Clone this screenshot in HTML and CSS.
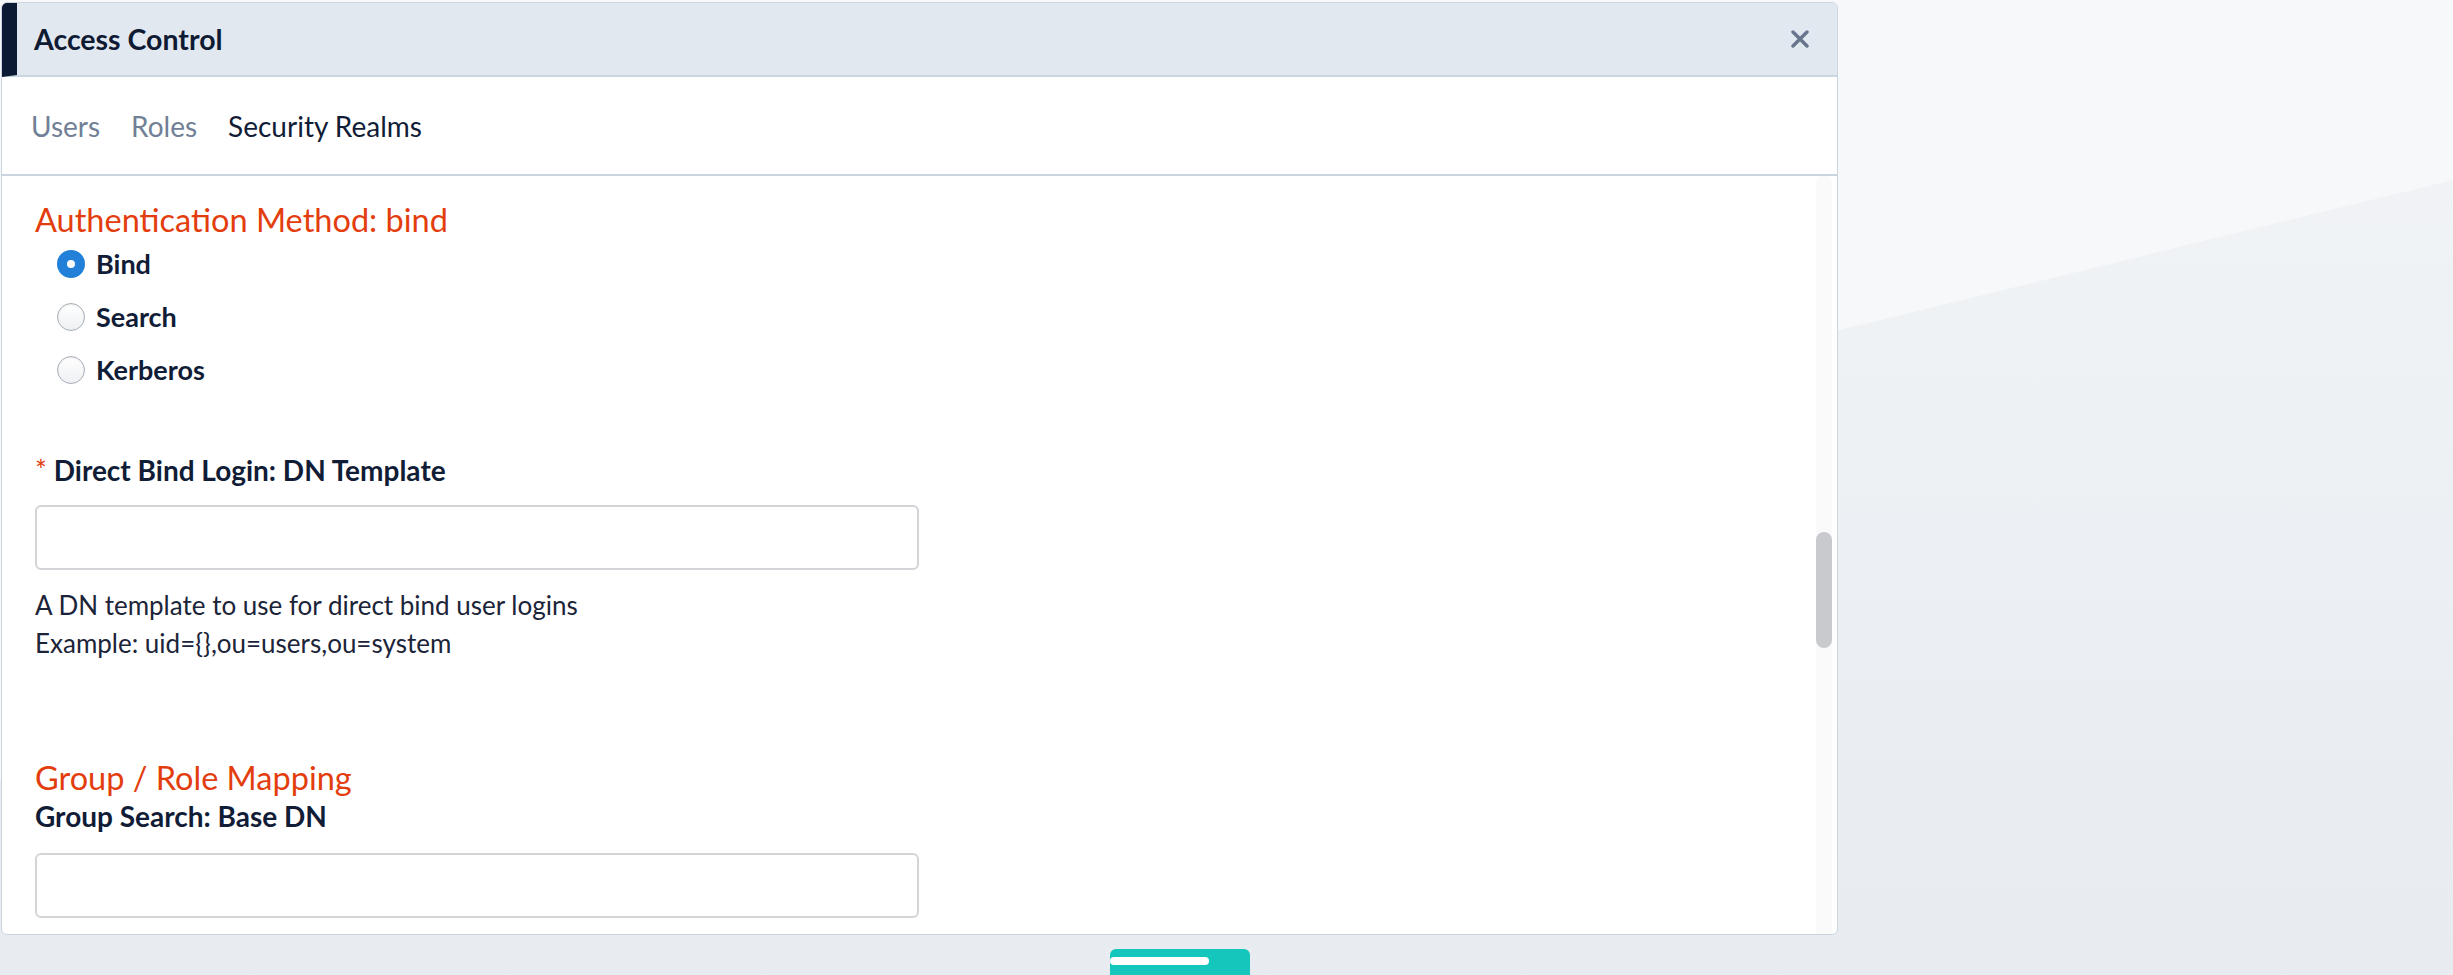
FILE: index.html
```html
<!DOCTYPE html>
<html lang="en">
<head>
    <meta charset="UTF-8">
    <meta name="viewport" content="width=device-width, initial-scale=1.0">
    <title>Access Control</title>
    <link rel="stylesheet" href="styles.css">
</head>
<body>
    <div class="modal">
        <div class="modal-header">
            <span class="modal-title">Access Control</span>
            <button class="close-btn" aria-label="Close">
                <svg width="18" height="18" viewBox="0 0 18 18">
                    <path d="M2 2 L16 16 M16 2 L2 16" stroke="currentColor" stroke-width="3.4" stroke-linecap="round" fill="none"/>
                </svg>
            </button>
        </div>

        <nav class="tabs">
            <a class="tab">Users</a>
            <a class="tab">Roles</a>
            <a class="tab active">Security Realms</a>
        </nav>

        <div class="modal-body">
            <div class="form">
                <h2 class="section-title">Authentication Method: bind</h2>
                <div class="radio-group">
                    <label class="radio"><span class="radio-dot checked"></span>Bind</label>
                    <label class="radio"><span class="radio-dot"></span>Search</label>
                    <label class="radio"><span class="radio-dot"></span>Kerberos</label>
                </div>

                <div class="field field-first">
                    <div class="field-label"><span class="req">*</span> Direct Bind Login: DN Template</div>
                    <input class="text-input" type="text">
                    <p class="help">A DN template to use for direct bind user logins<br>Example: uid={},ou=users,ou=system</p>
                </div>

                <h2 class="section-title section-gap">Group / Role Mapping</h2>
                <div class="field field-second">
                    <div class="field-label">Group Search: Base DN</div>
                    <input class="text-input" type="text">
                </div>
            </div>

            <!-- scrolled about halfway down -->
            <div class="scrollbar"><div class="thumb"></div></div>
        </div>
    </div>

    <div class="drawer-tab"><span class="drawer-pill"></span></div>
</body>
</html>
```

FILE: styles.css
```css
html, body {
    height: 975px;
    overflow: hidden;
}

body {
    margin: 0;
    font-family: Lato, "Open Sans", sans-serif;
    color: #111c36;
    background: linear-gradient(to bottom, #f2f4f7 0px, #eff2f5 320px, #e9ecf1 800px, #e8ebf0 975px);
    position: relative;
}

/* light wedge behind the modal */
body::before {
    content: "";
    position: absolute;
    inset: 0;
    background: #f7f8fa;
    clip-path: polygon(0 0, 100% 0, 100% 180px, 0 780px);
    z-index: -1;
}

.modal {
    box-sizing: border-box;
    width: 1837px;
    height: 933px;
    margin: 2px 0 0 1px;
    background: white;
    border: 1px solid #cbd5e0;
    border-radius: 6px;
    display: flex;
    flex-direction: column;
    overflow: hidden;
}

.modal-header {
    display: flex;
    align-items: center;
    justify-content: space-between;
    height: 72px;
    background: #e2e8f0;
    border-left: 15px solid #0c1a33;
    border-bottom: 2px solid #cbd5e0;
    padding: 0 28px 0 17px;
    flex-shrink: 0;
}

.modal-title {
    font-size: 28.5px;
    font-weight: 700;
    color: #0f1a33;
}

.close-btn {
    border: none;
    background: none;
    padding: 0;
    color: #67758c;
    display: flex;
    cursor: pointer;
}

.tabs {
    display: flex;
    align-items: center;
    gap: 31px;
    height: 97px;
    padding-left: 29px;
    border-bottom: 2px solid #cbd5e0;
    flex-shrink: 0;
}

.tab {
    font-size: 28px;
    color: #718096;
}

.tab.active {
    color: #111c36;
}

.modal-body {
    display: flex;
    flex: 1;
    min-height: 0;
}

.form {
    flex: 1;
    padding-left: 33px;
}

.section-title {
    margin: 26px 0 2px 0;
    font-size: 32.5px;
    font-weight: 400;
    line-height: 36px;
    color: #e33d0d;
}

.section-gap {
    margin-top: 98px;
}

.radio-group {
    display: flex;
    flex-direction: column;
    margin-top: -3px;
    padding-left: 22px;
}

.radio {
    display: flex;
    align-items: center;
    gap: 11px;
    height: 53px;
    font-size: 27px;
    font-weight: 700;
}

.radio-dot {
    box-sizing: border-box;
    width: 28px;
    height: 28px;
    border-radius: 50%;
    border: 1.5px solid #a8aeb8;
    background: linear-gradient(#ffffff, #eef0f3);
    box-shadow: inset 0 1px 2px rgba(0, 0, 0, 0.08);
}

.radio-dot.checked {
    border: 10px solid #2280d8;
    background: white;
    box-shadow: none;
}

.field-first {
    margin-top: 56px;
}

.field-label {
    font-size: 28px;
    font-weight: 700;
    line-height: 36px;
}

.req {
    color: #e33d0d;
    font-weight: 400;
}

.text-input {
    display: block;
    box-sizing: border-box;
    width: 884px;
    height: 65px;
    margin-top: 17px;
    border: 2px solid #d2d4d7;
    border-radius: 6px;
    background: white;
    font-size: 24px;
}

.field-second .text-input {
    margin-top: 19px;
}

.help {
    margin: 16px 0 0 0;
    font-size: 26px;
    line-height: 38px;
    color: #1b2438;
}

.scrollbar {
    width: 16px;
    margin-right: 5px;
    background: #fafafa;
    border-radius: 8px 8px 0 0;
}

.thumb {
    height: 116px;
    margin-top: 356px;
    background: #c9cacd;
    border-radius: 8px;
}

.drawer-tab {
    width: 140px;
    height: 30px;
    margin: 14px 0 0 1110px;
    background: #14c6bc;
    border-radius: 6px 6px 0 0;
    padding-top: 8px;
    box-sizing: border-box;
}

.drawer-pill {
    display: block;
    width: 99px;
    height: 8px;
    background: white;
    border-radius: 4px;
}
```
